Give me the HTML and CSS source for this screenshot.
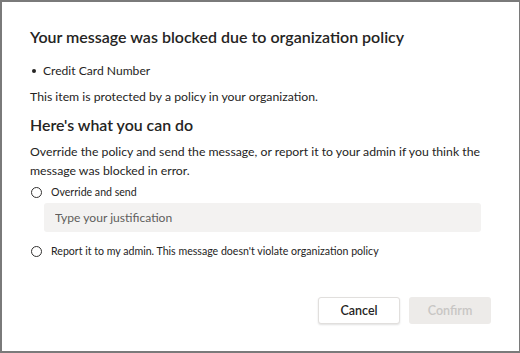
FILE: index.html
```html
<!DOCTYPE html>
<html lang="en">
<head>
    <meta charset="UTF-8">
    <title>Message blocked</title>
    <link rel="stylesheet" href="styles.css">
</head>
<body>
    <div class="dialog">
        <h1 class="title">Your message was blocked due to organization policy</h1>

        <ul class="reasons">
            <li>Credit Card Number</li>
        </ul>

        <p class="note">This item is protected by a policy in your organization.</p>

        <h2 class="subtitle">Here's what you can do</h2>
        <p class="desc">Override the policy and send the message, or report it to your admin if you think the message was blocked in error.</p>

        <label class="option">
            <input type="radio" name="action">
            <span>Override and send</span>
        </label>
        <input type="text" class="justify" placeholder="Type your justification">

        <label class="option report">
            <input type="radio" name="action">
            <span>Report it to my admin. This message doesn't violate organization policy</span>
        </label>

        <div class="actions">
            <button class="btn cancel">Cancel</button>
            <button class="btn confirm" disabled>Confirm</button>
        </div>
    </div>
</body>
</html>
```

FILE: styles.css
```css
* {
    margin: 0;
    padding: 0;
    box-sizing: border-box;
}

body {
    font-family: Lato, 'Open Sans', sans-serif;
    color: #252423;
    background: #ffffff;
}

.dialog {
    width: 520px;
    height: 353px;
    border: 2px solid #7a7a7a;
    border-right-width: 1px;
    padding: 24px 28px 0 28px;
    display: flex;
    flex-direction: column;
}

.title {
    font-size: 16px;
    font-weight: 600;
    line-height: 22px;
    margin-bottom: 15px;
}

.reasons {
    list-style: none;
    font-size: 12.1px;
    line-height: 16px;
    margin-bottom: 9px;
}

.reasons li::before {
    content: "";
    display: inline-block;
    width: 4px;
    height: 4px;
    border-radius: 50%;
    background: #252423;
    margin: 0 7px 2px 2px;
    vertical-align: middle;
}

.note {
    font-size: 12.25px;
    line-height: 18px;
    margin-bottom: 8px;
}

.subtitle {
    font-size: 15.9px;
    font-weight: 600;
    line-height: 22px;
    margin-bottom: 6px;
}

.desc {
    font-size: 12.25px;
    line-height: 19px;
    margin-bottom: 4px;
}

.option {
    display: flex;
    align-items: center;
    gap: 9px;
    font-size: 10.6px;
    line-height: 16px;
}

.option input {
    appearance: none;
    width: 11px;
    height: 11px;
    border: 1px solid #323130;
    border-radius: 50%;
    margin-left: 1px;
}

.justify {
    margin: 3px 10px 0 14px;
    height: 29px;
    border: none;
    border-radius: 3px;
    background: #f3f2f1;
    padding: 0 11px;
    font-family: inherit;
    font-size: 12.1px;
    color: #252423;
}

.justify::placeholder {
    color: #605e5c;
}

.report {
    margin-top: 11px;
}

.actions {
    display: flex;
    justify-content: flex-end;
    gap: 9px;
    margin-top: 38px;
}

.btn {
    width: 82px;
    height: 27px;
    border-radius: 3px;
    font-family: inherit;
    font-size: 12.5px;
    font-weight: 600;
}

.cancel {
    background: #ffffff;
    border: 1px solid #e1dfdd;
    color: #252423;
    box-shadow: 0 1px 2px rgb(0 0 0 / 0.12);
}

.confirm {
    background: #edebe9;
    border: none;
    color: #c8c6c4;
}
```
